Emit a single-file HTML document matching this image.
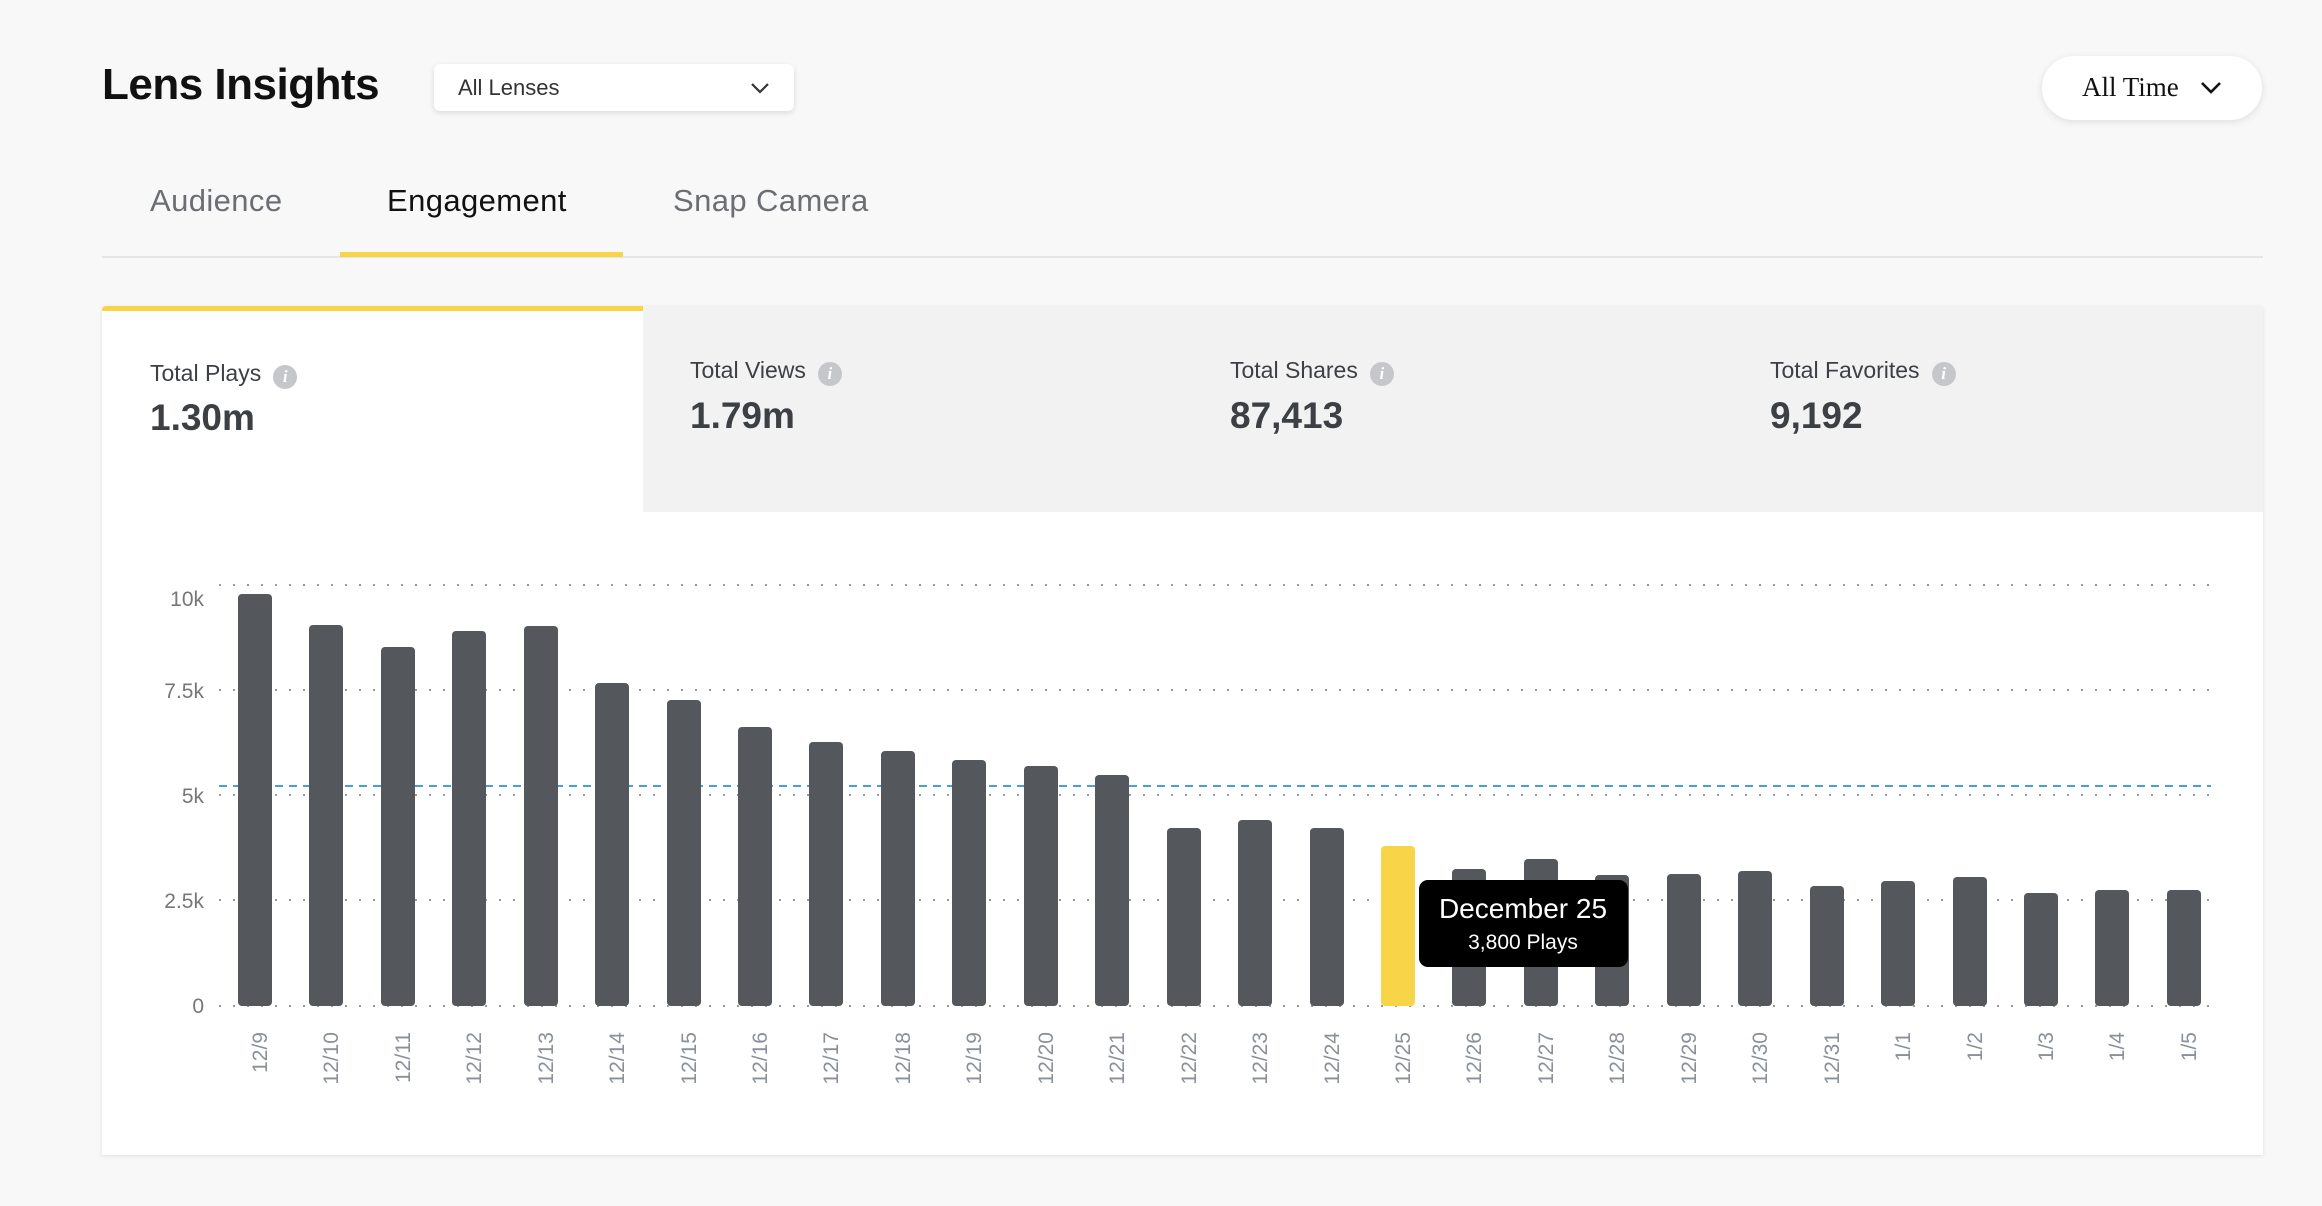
<!DOCTYPE html>
<html><head><meta charset="utf-8"><style>
*{margin:0;padding:0;box-sizing:border-box}
body{width:2322px;height:1206px;background:#f8f8f8;font-family:"Liberation Sans",sans-serif;position:relative;overflow:hidden}
.a{position:absolute;white-space:nowrap}
.lbl{font-size:23px;color:#3c3f44}
.val{font-size:37px;font-weight:bold;color:#3c3f44}
.info{display:inline-block;width:24px;height:24px;border-radius:50%;background:#c6c7cb;color:#fff;font:italic bold 17px "Liberation Serif",serif;text-align:center;line-height:24px;vertical-align:-1px;margin-left:12px}
.tab{font-size:31px;letter-spacing:0.4px}
</style></head><body>
<div class="a" style="left:102px;top:60px;font-size:44px;font-weight:bold;color:#111;letter-spacing:-0.5px">Lens Insights</div>
<div class="a" style="left:434px;top:64px;width:360px;height:47px;background:#fff;border-radius:6px;box-shadow:0 2px 6px rgba(0,0,0,.12)">
<span class="a" style="left:24px;top:11px;font-size:22px;color:#333">All Lenses</span>
<svg class="a" style="left:316px;top:17px" width="20" height="14"><path d="M2 3 L10 11 L18 3" stroke="#333" stroke-width="2.2" fill="none"/></svg></div>
<div class="a" style="left:2042px;top:56px;width:220px;height:64px;background:#fff;border-radius:32px;box-shadow:0 2px 8px rgba(0,0,0,.1)">
<span class="a" style="left:40px;top:16px;font:27px 'Liberation Serif',serif;color:#111">All Time</span>
<svg class="a" style="left:158px;top:24px" width="22" height="16"><path d="M2 3 L11 12 L20 3" stroke="#111" stroke-width="2.6" fill="none"/></svg></div>
<div class="a tab" style="left:150px;top:183px;color:#6b6e73">Audience</div>
<div class="a tab" style="left:387px;top:183px;color:#111">Engagement</div>
<div class="a tab" style="left:673px;top:183px;color:#6b6e73">Snap Camera</div>
<div class="a" style="left:102px;top:256px;width:2161px;height:2px;background:#e6e6e6"></div>
<div class="a" style="left:340px;top:252px;width:283px;height:5px;background:#f7d448"></div>
<div class="a" style="left:102px;top:306px;width:2161px;height:849px;background:#fff;box-shadow:0 1px 4px rgba(0,0,0,.1);border-radius:4px 4px 0 0"></div>
<div class="a" style="left:643px;top:306px;width:1620px;height:206px;background:#f2f2f2"></div>
<div class="a" style="left:102px;top:306px;width:541px;height:5px;background:#f7d448;border-radius:4px 0 0 0"></div>
<div class="a lbl" style="left:150px;top:360px">Total Plays<span class="info">i</span></div>
<div class="a val" style="left:150px;top:397px">1.30m</div>
<div class="a lbl" style="left:690px;top:357px">Total Views<span class="info">i</span></div>
<div class="a val" style="left:690px;top:395px">1.79m</div>
<div class="a lbl" style="left:1230px;top:357px">Total Shares<span class="info">i</span></div>
<div class="a val" style="left:1230px;top:395px">87,413</div>
<div class="a lbl" style="left:1770px;top:357px">Total Favorites<span class="info">i</span></div>
<div class="a val" style="left:1770px;top:395px">9,192</div>
<svg class="a" style="left:0;top:0" width="2322" height="1206" font-family="Liberation Sans, sans-serif">
<g stroke="#999" stroke-width="2" stroke-dasharray="2 12">
<line x1="219" y1="585" x2="2211" y2="585"/><line x1="219" y1="690" x2="2211" y2="690"/><line x1="219" y1="795" x2="2211" y2="795"/><line x1="219" y1="900" x2="2211" y2="900"/><line x1="219" y1="1006" x2="2211" y2="1006"/></g>
<line x1="219" y1="786" x2="2211" y2="786" stroke="#4a9ee0" stroke-width="2" stroke-dasharray="8 6"/>
<g font-size="21" fill="#777" text-anchor="end">
<text x="204" y="606">10k</text><text x="204" y="698">7.5k</text><text x="204" y="803">5k</text><text x="204" y="908">2.5k</text><text x="204" y="1013">0</text></g>
<g fill="#54575b">
<rect x="238" y="594" width="34" height="412" rx="4"/>
<rect x="309" y="625" width="34" height="381" rx="4"/>
<rect x="381" y="647" width="34" height="359" rx="4"/>
<rect x="452" y="631" width="34" height="375" rx="4"/>
<rect x="524" y="626" width="34" height="380" rx="4"/>
<rect x="595" y="683" width="34" height="323" rx="4"/>
<rect x="667" y="700" width="34" height="306" rx="4"/>
<rect x="738" y="727" width="34" height="279" rx="4"/>
<rect x="809" y="742" width="34" height="264" rx="4"/>
<rect x="881" y="751" width="34" height="255" rx="4"/>
<rect x="952" y="760" width="34" height="246" rx="4"/>
<rect x="1024" y="766" width="34" height="240" rx="4"/>
<rect x="1095" y="775" width="34" height="231" rx="4"/>
<rect x="1167" y="828" width="34" height="178" rx="4"/>
<rect x="1238" y="820" width="34" height="186" rx="4"/>
<rect x="1310" y="828" width="34" height="178" rx="4"/>
<rect x="1381" y="846" width="34" height="160" rx="4" fill="#f7d448"/>
<rect x="1452" y="869" width="34" height="137" rx="4"/>
<rect x="1524" y="859" width="34" height="147" rx="4"/>
<rect x="1595" y="875" width="34" height="131" rx="4"/>
<rect x="1667" y="874" width="34" height="132" rx="4"/>
<rect x="1738" y="871" width="34" height="135" rx="4"/>
<rect x="1810" y="886" width="34" height="120" rx="4"/>
<rect x="1881" y="881" width="34" height="125" rx="4"/>
<rect x="1953" y="877" width="34" height="129" rx="4"/>
<rect x="2024" y="893" width="34" height="113" rx="4"/>
<rect x="2095" y="890" width="34" height="116" rx="4"/>
<rect x="2167" y="890" width="34" height="116" rx="4"/></g>
<g font-size="21" fill="#8a9099" text-anchor="end">
<text transform="translate(267,1032) rotate(-90)">12/9</text>
<text transform="translate(338,1032) rotate(-90)">12/10</text>
<text transform="translate(410,1032) rotate(-90)">12/11</text>
<text transform="translate(481,1032) rotate(-90)">12/12</text>
<text transform="translate(553,1032) rotate(-90)">12/13</text>
<text transform="translate(624,1032) rotate(-90)">12/14</text>
<text transform="translate(696,1032) rotate(-90)">12/15</text>
<text transform="translate(767,1032) rotate(-90)">12/16</text>
<text transform="translate(838,1032) rotate(-90)">12/17</text>
<text transform="translate(910,1032) rotate(-90)">12/18</text>
<text transform="translate(981,1032) rotate(-90)">12/19</text>
<text transform="translate(1053,1032) rotate(-90)">12/20</text>
<text transform="translate(1124,1032) rotate(-90)">12/21</text>
<text transform="translate(1196,1032) rotate(-90)">12/22</text>
<text transform="translate(1267,1032) rotate(-90)">12/23</text>
<text transform="translate(1339,1032) rotate(-90)">12/24</text>
<text transform="translate(1410,1032) rotate(-90)">12/25</text>
<text transform="translate(1481,1032) rotate(-90)">12/26</text>
<text transform="translate(1553,1032) rotate(-90)">12/27</text>
<text transform="translate(1624,1032) rotate(-90)">12/28</text>
<text transform="translate(1696,1032) rotate(-90)">12/29</text>
<text transform="translate(1767,1032) rotate(-90)">12/30</text>
<text transform="translate(1839,1032) rotate(-90)">12/31</text>
<text transform="translate(1910,1032) rotate(-90)">1/1</text>
<text transform="translate(1982,1032) rotate(-90)">1/2</text>
<text transform="translate(2053,1032) rotate(-90)">1/3</text>
<text transform="translate(2124,1032) rotate(-90)">1/4</text>
<text transform="translate(2196,1032) rotate(-90)">1/5</text></g>
<rect x="1419" y="880" width="209" height="87" rx="9" fill="#000"/>
<text x="1523" y="918" font-size="28" fill="#fff" text-anchor="middle">December 25</text>
<text x="1523" y="949" font-size="21" fill="#fff" text-anchor="middle">3,800 Plays</text>
</svg>
</body></html>
